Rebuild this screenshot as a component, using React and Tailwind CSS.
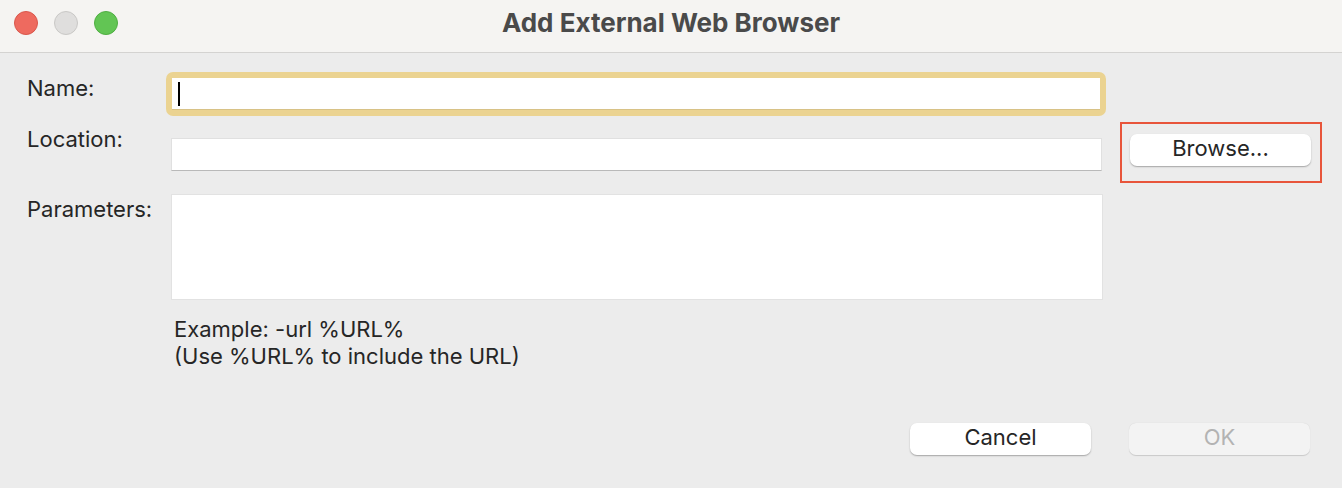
import { useState } from 'react';

export default function App() {
  const [name, setName] = useState('');
  const [location, setLocation] = useState('');
  const [params, setParams] = useState('');

  return (
    <div className="w-[1342px] h-[488px] bg-[#ececec] flex flex-col font-['Inter','Liberation_Sans',sans-serif] text-[#262626] overflow-hidden">
      {/* title bar */}
      <div className="h-[53px] shrink-0 bg-[#f5f4f2] border-b border-[#d4d3d1] flex items-center relative">
        <div className="flex gap-[16px] pl-[14px] pb-[6px]">
          <span className="w-[24px] h-[24px] rounded-full bg-[#ee6a5f] border border-[#d9574c]" />
          <span className="w-[24px] h-[24px] rounded-full bg-[#dfdedd] border border-[#c9c8c6]" />
          <span className="w-[24px] h-[24px] rounded-full bg-[#62c554] border border-[#4fae42]" />
        </div>
        <div className="absolute inset-0 flex items-center justify-center pb-[7px] text-[26px] font-bold text-[#4a4a4a] pointer-events-none">
          Add External Web Browser
        </div>
      </div>

      {/* form */}
      <div className="flex-1 flex flex-col pl-[27px] pr-[20px] pt-[19px] text-[22px] leading-[33px]">
        <div className="flex items-start">
          <div className="w-[139px]">Name:</div>
          <div className="w-[940px] h-[44px] rounded-[7px] bg-[#ebd391] p-[6px]">
            <div className="h-full bg-white border-b border-[#d8c286] flex items-center pl-[6px]">
              <span className="w-[2px] h-[24px] bg-black shrink-0" />
              <input
                value={name}
                onChange={(e) => setName(e.target.value)}
                className="w-full h-full outline-none bg-transparent pl-[2px]"
              />
            </div>
          </div>
        </div>

        <div className="flex items-start mt-[22px]">
          <div className="w-[144px] -mt-[15px]">Location:</div>
          <input
            value={location}
            onChange={(e) => setLocation(e.target.value)}
            className="w-[931px] h-[33px] bg-white border border-[#e0e0e0] border-b-[#b9b9b9] outline-none px-[5px]"
          />
          <div className="ml-[18px] -mt-[16px] border-2 border-[#e8553b] w-[202px] h-[61px] flex items-start pt-[10px] pl-[8px]">
            <button className="w-[181px] h-[32px] pb-[4px] bg-white rounded-[7px] shadow-[0_1px_1.5px_rgba(0,0,0,0.3)] leading-[28px] text-[#262626]">
              Browse...
            </button>
          </div>
        </div>

        <div className="flex items-start mt-[11px]">
          <div className="w-[144px] -mt-[1px]">Parameters:</div>
          <textarea
            value={params}
            onChange={(e) => setParams(e.target.value)}
            className="w-[932px] h-[106px] bg-white border border-[#e2e2e2] outline-none resize-none px-[5px]"
          />
        </div>

        <div className="ml-[147px] mt-[16px] leading-[27px]">
          <div>Example: -url %URL%</div>
          <div>(Use %URL% to include the URL)</div>
        </div>

        <div className="flex justify-end gap-[38px] mt-[53px] pr-[12px]">
          <button className="w-[181px] h-[32px] pb-[4px] bg-white rounded-[7px] shadow-[0_1px_1.5px_rgba(0,0,0,0.3)] leading-[28px] text-[#262626]">
            Cancel
          </button>
          <button disabled className="w-[181px] h-[32px] pb-[4px] bg-[#f3f3f3] rounded-[7px] shadow-[0_0.5px_1px_rgba(0,0,0,0.15)] leading-[28px] text-[#b3b3b3]">
            OK
          </button>
        </div>
      </div>
    </div>
  );
}
